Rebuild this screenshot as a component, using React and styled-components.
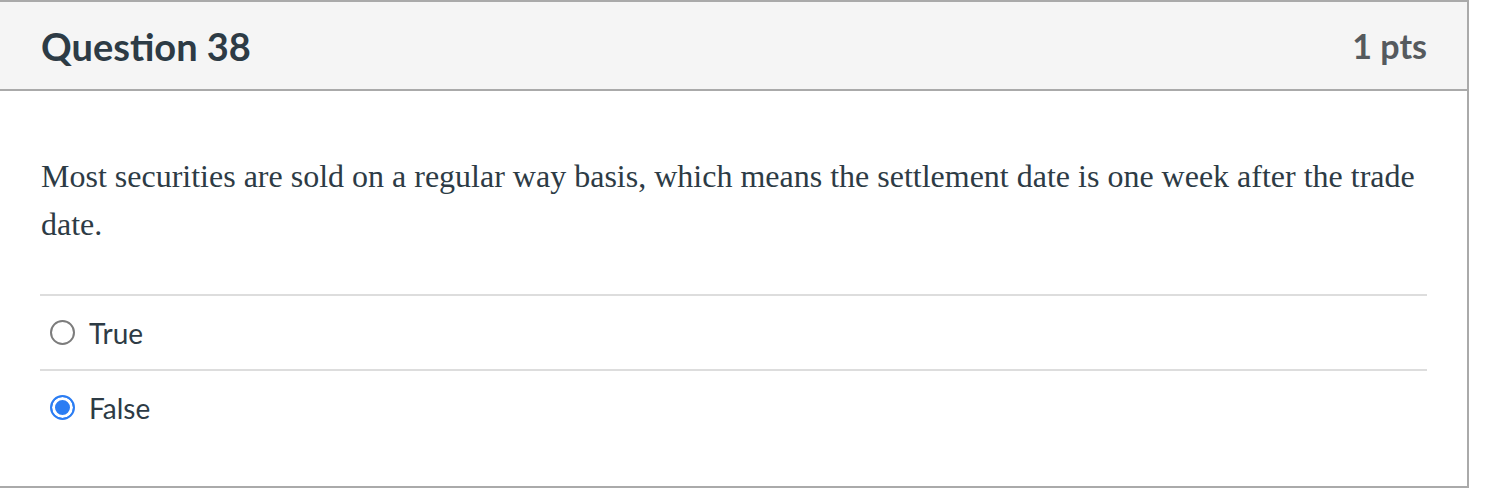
import React from "react";
import styled, { createGlobalStyle } from "styled-components";

const Global = createGlobalStyle`
  html, body { margin: 0; padding: 0; background: #fff; }
  body { font-family: Lato, "Noto Sans", sans-serif; }
`;

const Card = styled.section`
  width: 1467px;
  height: 484px;
  border-top: 2px solid #aaaaaa;
  border-right: 2px solid #aaaaaa;
  border-bottom: 2px solid #aaaaaa;
  display: flex;
  flex-direction: column;
  background: #fff;
`;

const Header = styled.header`
  height: 87px;
  flex: none;
  background: #f5f5f5;
  border-bottom: 2px solid #aaaaaa;
  display: flex;
  align-items: center;
  justify-content: space-between;
  padding: 0 40px 0 41px;
`;

const Title = styled.h2`
  margin: 0;
  font-family: Lato, sans-serif;
  font-weight: 700;
  font-size: 38px;
  color: #2d3b45;
`;

const Points = styled.span`
  font-family: Lato, sans-serif;
  font-weight: 700;
  font-size: 34px;
  color: #555a5e;
`;

const Body = styled.div`
  padding: 61px 40px 0 40px;
`;

const Prompt = styled.p`
  margin: 0 0 46px 1px;
  font-family: "Liberation Serif", "Times New Roman", serif;
  font-size: 32px;
  line-height: 48px;
  color: #2d3b45;
`;

const Answers = styled.div`
  display: flex;
  flex-direction: column;
`;

const Answer = styled.label`
  height: 73px;
  border-top: 2px solid #dddddd;
  display: flex;
  align-items: center;
  gap: 14px;
  padding-left: 10px;
`;

const Radio = styled.span`
  width: 21px;
  height: 21px;
  border-radius: 50%;
  flex: none;
  border: 2px solid ${(p) => (p.$checked ? "#2b7df3" : "#7c7c7c")};
  background: ${(p) => (p.$checked ? "#2b7df3" : "#fff")};
  box-shadow: inset 0 0 0 3px #fff;
`;

const AnswerText = styled.span`
  font-family: Lato, sans-serif;
  font-size: 28px;
  color: #2d3b45;
`;

export default function App() {
  const answers = [
    { text: "True", checked: false },
    { text: "False", checked: true },
  ];
  return (
    <>
      <Global />
      <Card>
        <Header>
          <Title>Question 38</Title>
          <Points>1 pts</Points>
        </Header>
        <Body>
          <Prompt>
            Most securities are sold on a regular way basis, which means the
            settlement date is one week after the trade date.
          </Prompt>
          <Answers>
            {answers.map((a) => (
              <Answer key={a.text}>
                <Radio $checked={a.checked} />
                <AnswerText>{a.text}</AnswerText>
              </Answer>
            ))}
          </Answers>
        </Body>
      </Card>
    </>
  );
}
